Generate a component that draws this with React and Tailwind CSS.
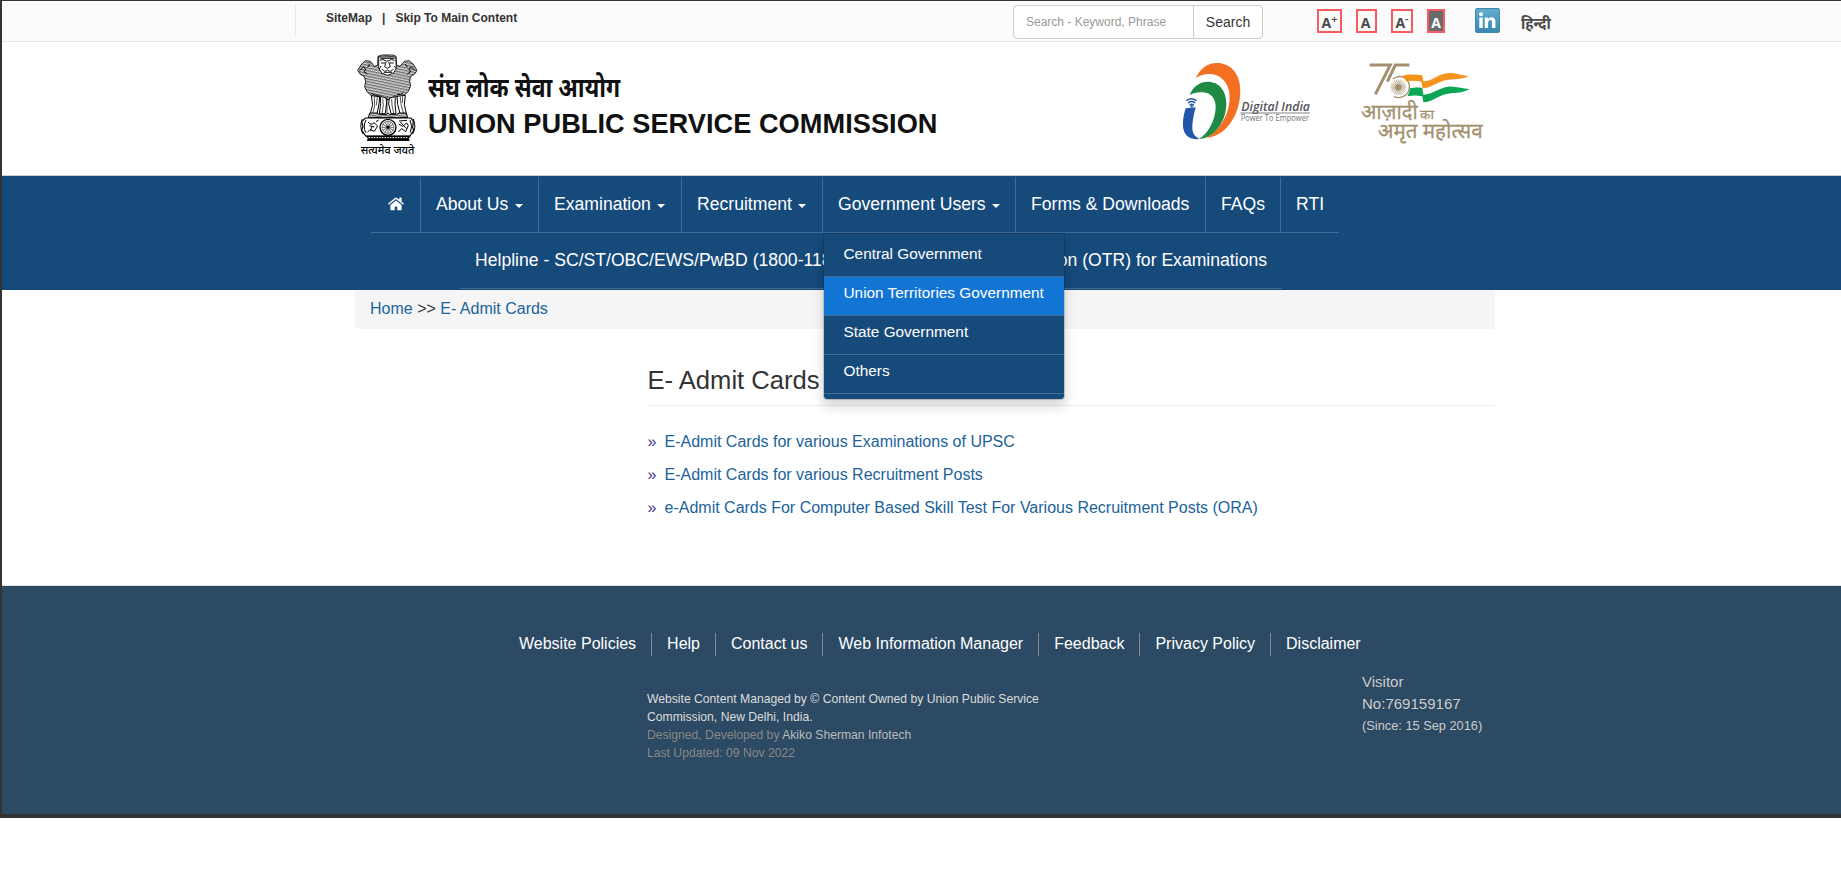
import React from "react";

const FooterLinks = ["Website Policies", "Help", "Contact us", "Web Information Manager", "Feedback", "Privacy Policy", "Disclaimer"];

function Emblem() {
  const spokes = Array.from({ length: 12 }, (_, i) => i * 30);
  return (
    <svg className="block h-[102px] w-[61px] overflow-visible" viewBox="54 30 183 306">
      <defs>
        <pattern id="fur" width="8" height="8" patternUnits="userSpaceOnUse" patternTransform="rotate(12)">
          <rect width="8" height="8" fill="#fff" />
          <path d="M0 1q2 5 4 1q2 4 4 0M1 7q2-4 3-1q3-3 4 1M2 3v2M6 4v2" fill="none" stroke="#000" strokeWidth="1.5" />
        </pattern>
      </defs>
      <path d="M117 37L128 33H162L171 37L173 64L183 67L196 52L210 50L222 60L234 79L228 89L214 98L212 112L215 125L208 142L192 157L178 160L167 155L156 164L146 167L134 163L124 155L112 160L98 156L84 143L77 128L80 112L76 98L63 90L56 79L68 60L80 50L94 52L106 67L116 64Z" fill="url(#fur)" stroke="#000" strokeWidth="2.500" strokeLinejoin="round" />
      <path d="M119 39h51l2 34-9 14-17 7-17-6-10-16z" fill="#fff" stroke="#000" strokeWidth="2.500" />
      <path d="M124 43h42M122 49q10-6 20 2h5q10-8 20-2M126 57h12M152 57h12M141 54l-4 14 8 5 9-5-5-14M129 75q8 12 17 3q9 9 17-3M126 66l-5 9M166 66l5 8M134 85h25" fill="none" stroke="#000" strokeWidth="2.800" />
      <path d="M62 80l12-12 6 7-5 8 10 7M228 80l-12-12-6 7 5 8-10 7M92 60l-6 10M199 60l6 10M96 148q12 8 23 6M174 152q12 2 19-6" fill="none" stroke="#000" strokeWidth="3" />
      <path d="M97 155l4 27-7 27h20l6-29 2-22zM124 157l1 22-4 30h18l4-34-2-13zM151 162l-2 18 7 29h15l-3-29 1-22zM174 157l2 24 7 28h19l-6-27 3-28z" fill="#fff" stroke="#000" strokeWidth="3" />
      <path d="M106 158l1 27-5 22M115 158l-3 26M131 163l2 20-4 25M158 164l1 20 5 23M184 158l2 23 7 26M191 157l-1 20M144 158v50" fill="none" stroke="#000" strokeWidth="2" />
      <path d="M92 207h22l7 5h20l6-5 6 5h20l7-5h22l4 14H88z" fill="url(#fur)" stroke="#000" strokeWidth="3" />
      <path d="M79 222h137l7 10-2 18 3 9-11 17H80l-12-17 4-12-4-14z" fill="#fff" stroke="#000" strokeWidth="3.500" />
      <path d="M70 225q-10 24 2 45M223 225q10 24-2 45M81 228q-10 18-1 38M213 228q9 18 1 38M87 234q9 12 18 2l11 10-10 16-13-5-8 8M91 245l15 4M94 260l5-12M179 240l12 7 12-10 5 8-8 18-12-9-10 10M184 234l18 20M111 233l8-5M180 231l24-2" fill="none" stroke="#000" strokeWidth="3" />
      <path d="M80 275h135l-5 8 2 8H84l2-8z" fill="#000" />
      <path d="M88 281h118" stroke="#fff" strokeDasharray="5 3" strokeWidth="3" />
      <circle cx="147" cy="250" r="24" fill="#fff" stroke="#000" strokeWidth="4" />
      <circle cx="147" cy="250" r="18" fill="none" stroke="#000" strokeWidth="1.5" />
      {spokes.map((a) => (
        <path key={a} d="M147 250v-18" stroke="#000" strokeWidth="1.7" transform={`rotate(${a} 147 250)`} />
      ))}
      <circle cx="147" cy="250" r="4" />
      <text x="65" y="331" textLength="161" lengthAdjust="spacingAndGlyphs" fontSize="32" fontWeight="500" fontFamily="'Noto Sans Devanagari','Noto Sans',sans-serif">सत्यमेव जयते</text>
    </svg>
  );
}

function DigitalIndia() {
  return (
    <svg className="block h-20 w-[130px] overflow-visible" viewBox="66 51 390 240">
      <path d="M107 99C123 65 149 52 176 54c40 4 65 35 65 83 0 72-44 139-104 141 38-16 69-65 72-116 2-42-21-72-57-75-16-1-31 3-45 12z" fill="#f36f21" />
      <path d="M89 150c10-26 31-40 54-40 34 0 56 27 56 66 0 53-35 102-82 106 26-15 48-53 50-93 1-28-14-46-38-47-15-1-28 1-40 8z" fill="#1f8a43" />
      <path d="M77 190l30-3c-8 31-13 60-8 75 4 11 11 16 20 20-31 3-49-12-50-40-1-16 2-34 8-52z" fill="#2356a8" />
      <path d="M81 166q13-10 27 0M86 173q9-7 18 0M90 180q5-4 10 0" fill="none" stroke="#2356a8" strokeWidth="4.5" strokeLinecap="round" />
      <circle cx="95" cy="184" r="3.5" fill="#2356a8" />
      <text x="244" y="198" textLength="206" lengthAdjust="spacingAndGlyphs" fontSize="36" fontWeight="600" fontStyle="italic" fill="#55565a" fontFamily="'Open Sans',sans-serif">Digital India</text>
      <path d="M241 204h209" stroke="#66676b" strokeWidth="2.5" />
      <text x="242" y="228" textLength="205" lengthAdjust="spacingAndGlyphs" fontSize="25" fill="#717277" fontFamily="'Open Sans',sans-serif">Power To Empower</text>
    </svg>
  );
}

function Azadi() {
  const rays = Array.from({ length: 24 }, (_, i) => i * 15);
  return (
    <svg className="block h-[84px] w-[124px] overflow-visible" viewBox="600 51 372 252">
      <path d="M629 60h62l-45 88" fill="none" stroke="#a38f6d" strokeWidth="9" />
      <path d="M748 60h-42l-24 50" fill="none" stroke="#a38f6d" strokeWidth="9" />
      <path d="M698 102c26-18 53 1 50 27-3 23-25 34-47 26" fill="none" stroke="#a38f6d" strokeWidth="4" />
      {rays.map((a) => (
        <path key={a} d="M715 127v-24" stroke="#a38f6d" strokeWidth="1.8" transform={`rotate(${a} 715 127)`} />
      ))}
      <circle cx="715" cy="127" r="9" fill="#a38f6d" />
      <path d="M725 93c22-6 38-5 62-2l3 18c31-1 42-24 79-25 23-1 38 10 59 8-27 14-49 8-72 14-28 7-43 24-68 24l-4-20c-15-2-32-5-45 0-4-8-8-13-14-17z" fill="#f7941d" />
      <path d="M749 130c16-3 27-3 38-1l3 20c30-1 44-21 76-24 23-2 41 7 62 7-27 16-49 9-72 16-26 7-40 23-66 24l-3-18c-16-3-29-3-45 0 5-8 7-15 7-24z" fill="#0aa651" />
      <g fill="#a38f6d" stroke="#a38f6d" strokeWidth="0.8" fontFamily="'Noto Sans Devanagari','Noto Sans',sans-serif">
        <text x="603" y="221" fontSize="60" textLength="170" lengthAdjust="spacingAndGlyphs">आज़ादी</text>
        <text x="780" y="222" fontSize="37" textLength="42" lengthAdjust="spacingAndGlyphs">का</text>
        <text x="653" y="280" fontSize="60" textLength="315" lengthAdjust="spacingAndGlyphs">अमृत महोत्सव</text>
      </g>
    </svg>
  );
}

function HomeIcon() {
  return (
    <svg className="ml-[1.5px] block h-[14px] w-4" viewBox="0 0 16 14" fill="#fff">
      <path d="M8 3.4L2.4 8v4.6q0 .6.6.6h3.7V9.4h2.6v3.8H13q.6 0 .6-.6V8z" />
      <path d="M15.8 6.6L13.6 4.800V.9q0-.3-.3-.3h-1.700q-.3 0-.3.3v1.900L9 .9Q8 .1 7 .9L.2 6.600q-.2.200 0 .4l.5.600q.200.200.4 0L8 1.900l6.900 5.700q.200.200.4 0l.5-.6q.200-.200 0-.4z" />
    </svg>
  );
}

function NavItem({ label, caret, width, last }) {
  return (
    <li className={`flex h-14 items-center border-b border-[#3f6b95] pb-[1px] pl-[15px] ${width} ${last ? "" : "border-r"}`}>
      <span>{label}</span>
      {caret && <span className="mt-[3px] ml-[6.5px] border-x-4 border-t-4 border-x-transparent border-t-white" />}
    </li>
  );
}

function SizeBox({ sign, className }) {
  return (
    <span className={`flex h-6 items-start justify-center border-2 pt-[3px] font-['Open_Sans'] text-[14px] leading-[18px] font-bold ${className}`}>
      A{sign && <span className="-mt-[4px] text-[11px] font-semibold">{sign}</span>}
    </span>
  );
}

function Dropdown() {
  const items = ["Central Government", "Union Territories Government", "State Government", "Others"];
  return (
    <ul className="absolute top-[56px] left-[452px] z-10 box-border h-[167px] w-[242px] rounded-b-[4px] border border-black/15 bg-[#164a7b] bg-clip-padding pt-[4px] text-[15.36px] shadow-[0_6px_12px_rgba(0,0,0,0.175)]">
      {items.map((t, i) => (
        <li key={t} className={`h-[39px] border-b border-[#3f6b95] pl-[19.5px] leading-[32px] whitespace-nowrap ${i === 1 ? "bg-[#1275d4]" : ""}`}>
          {t}
        </li>
      ))}
    </ul>
  );
}

export default function App() {
  return (
    <div className="min-h-[893px] bg-white font-['Liberation_Sans',Arial,sans-serif] text-base leading-normal text-[#333]">
      <div className="flex h-[818px] flex-col border-t border-b-4 border-l-2 border-[#333]">
        <div className="flex h-[41px] shrink-0 border-b border-[#e7e7e7] bg-[#fbfbfb] pl-[293px]">
          <div className="mt-1 flex h-[30px] w-[718px] border-l border-[#e7e7e7] pt-[5px] pl-[30px] text-[12px] leading-[16px] font-bold">
            <span>SiteMap</span>
            <span className="mx-[10px]">|</span>
            <span>Skip To Main Content</span>
          </div>
          <div className="mt-1 flex h-[34px] w-[250px] rounded-[4px] border border-[#ccc] bg-white">
            <span className="w-[180px] border-r border-[#ccc] pl-3 text-[12px] leading-[32px] text-[#999]">Search - Keyword, Phrase</span>
            <span className="flex-1 text-center text-[14px] leading-[33px]">Search</span>
          </div>
          <div className="ml-[54px] flex pt-2 text-[#4a4a4a]">
            <SizeBox sign="+" className="w-[25px] border-[#f65b60]" />
            <SizeBox className="ml-[14px] w-[21px] border-[#f65b60] pr-[2px]" />
            <SizeBox sign="-" className="ml-[14px] w-[22px] border-[#f65b60]" />
            <SizeBox className="ml-[14px] w-[18px] border-[#f65b60] bg-[#6b6b6b] text-white" />
            <svg className="-mt-px ml-[29.5px] h-[25px] w-[25px]" viewBox="0 0 25 25">
              <defs>
                <linearGradient id="li" x1="0" y1="0" x2="0" y2="1">
                  <stop offset="0" stopColor="#62aed0" />
                  <stop offset="1" stopColor="#3787b0" />
                </linearGradient>
              </defs>
              <rect x=".5" y=".5" width="24" height="24" rx="1.500" fill="url(#li)" stroke="#4288ab" />
              <circle cx="6" cy="6.200" r="2" fill="#fff" />
              <path d="M4.300 9.500h3.400v10.500H4.300zM9.700 9.500h3.200v1.500c1-1.300 2-1.800 3.500-1.800 2.700 0 4 1.700 4 4.400V20H17v-5.700c0-1.500-.5-2.300-1.700-2.300-1.400 0-2.200 1-2.200 2.500V20H9.700z" fill="#fff" />
            </svg>
            <span className="mt-[2px] ml-[21.5px] origin-left scale-x-[0.88] font-['Noto_Sans_Devanagari','Noto_Sans',sans-serif] text-[16.5px] leading-[28px] font-bold whitespace-nowrap">हिन्दी</span>
          </div>
        </div>

        <header className="flex h-[134px] shrink-0 border-b border-[#c9d0cc] pl-[355px]">
          <div className="pt-[12px]">
            <Emblem />
          </div>
          <div className="w-[754px] pt-[28px] pl-[10px] text-[27.2px] leading-[36px] font-bold tracking-[0.03px] text-[#111]">
            <div className="h-[36px] w-[225px] origin-left scale-x-[0.845] pt-[4px] font-['Noto_Sans_Devanagari','Noto_Sans',sans-serif] leading-[34px] whitespace-nowrap">संघ लोक सेवा आयोग</div>
            <div>UNION PUBLIC SERVICE COMMISSION</div>
          </div>
          <div className="ml-[10px] flex gap-12 pt-5">
            <DigitalIndia />
            <Azadi />
          </div>
        </header>

        <nav className="h-[114px] shrink-0 bg-[#164a7b] pt-px pl-[369px] text-[17.6px] text-white">
          <div className="relative">
            <ul className="flex">
              <NavItem label={<HomeIcon />} width="w-[50px]" />
              <NavItem label="About Us" caret width="w-[118px]" />
              <NavItem label="Examination" caret width="w-[143px]" />
              <NavItem label="Recruitment" caret width="w-[141px]" />
              <NavItem label="Government Users" caret width="w-[193px]" />
              <NavItem label="Forms & Downloads" width="w-[190px]" />
              <NavItem label="FAQs" width="w-[75px]" />
              <NavItem label="RTI" width="w-[58px]" last />
            </ul>
            <ul className="ml-[89px] flex h-14 w-[822px] items-center justify-between border-b border-[#3f6b95] px-[15px] pb-px">
              <li>Helpline - SC/ST/OBC/EWS/PwBD (1800-118-711)</li>
              <li>One Time Registration (OTR) for Examinations</li>
            </ul>
            <Dropdown />
          </div>
        </nav>

        <main className="h-[295px] shrink-0 pl-[353px]">
          <div className="h-[39px] w-[1140px] rounded-[4px] bg-[#f5f5f5] pl-[15px] leading-[38px]">
            <a className="text-[#20639b]">Home</a> &gt;&gt; <a className="text-[#20639b]">E- Admit Cards</a>
          </div>
          <div className="ml-[292.5px] w-[847.5px] pt-[33px]">
            <h1 className="h-[44px] border-b border-[#eee] text-[25.6px] leading-[36px]">E- Admit Cards</h1>
            <ul className="mt-[19px] text-[#20639b]">
              {[
                "E-Admit Cards for various Examinations of UPSC",
                "E-Admit Cards for various Recruitment Posts",
                "e-Admit Cards For Computer Based Skill Test For Various Recruitment Posts (ORA)",
              ].map((t) => (
                <li key={t} className="flex h-[33px] items-center">
                  <span className="w-[17px] text-[#45338a]">»</span>
                  <span>{t}</span>
                </li>
              ))}
            </ul>
          </div>
        </main>

        <footer className="flex-1 border-t border-[#dde3e8] bg-[#2c4a63] bg-clip-padding">
          <ul className="ml-[502px] flex pt-[47px] text-white">
            {FooterLinks.map((t, i) => (
              <li key={t} className={`h-[23px] px-[15px] leading-[22px] ${i < 6 ? "border-r border-[#8a8a8a]" : ""}`}>
                {t}
              </li>
            ))}
          </ul>
          <div className="flex pl-[645px]">
            <div className="w-[715px] pt-[34px] text-[12.16px] leading-[18px] text-[#888]">
              <p className="w-[410px] text-[#ddd]">Website Content Managed by © Content Owned by Union Public Service Commission, New Delhi, India.</p>
              <p>Designed, Developed by <span className="text-[#bbb]">Akiko Sherman Infotech</span></p>
              <p>Last Updated: 09 Nov 2022</p>
            </div>
            <div className="pt-[15px] text-[15.04px] leading-[22px] text-[#ccc]">
              <p>Visitor</p>
              <p>No:769159167</p>
              <p className="text-[12.8px]">(Since: 15 Sep 2016)</p>
            </div>
          </div>
        </footer>
      </div>
    </div>
  );
}
